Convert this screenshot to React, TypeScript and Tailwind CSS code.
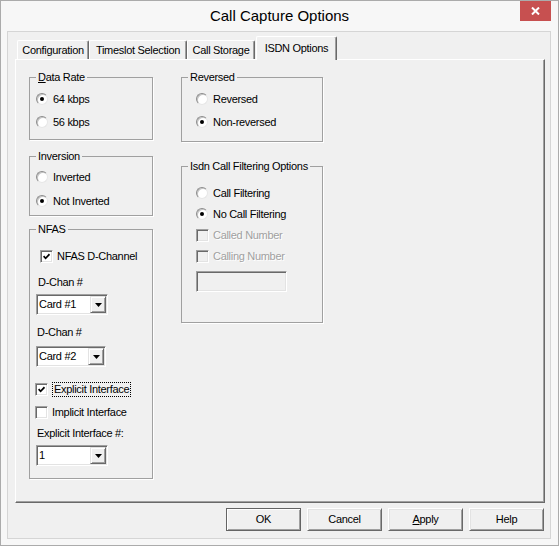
import React from 'react';

const font = "font-['Liberation_Sans',Arial,sans-serif]";

function Radio({ label, checked }: { label: string; checked?: boolean }) {
  return (
    <div className="flex items-center h-[16px] gap-[5px]">
      <span className="w-[12px] h-[12px] shrink-0 rounded-full bg-white border border-t-[#8c8c8c] border-l-[#8c8c8c] border-r-[#e6e6e6] border-b-[#e6e6e6] shadow-[inset_1px_1px_0_#c4c4c4] flex items-center justify-center">
        {checked && <span className="w-[4px] h-[4px] rounded-full bg-black" />}
      </span>
      <span>{label}</span>
    </div>
  );
}

function Check({
  label,
  checked,
  disabled,
  focused,
}: {
  label: string;
  checked?: boolean;
  disabled?: boolean;
  focused?: boolean;
}) {
  return (
    <div className="flex items-center h-[16px] gap-[4px]">
      <span
        className={`w-[13px] h-[13px] shrink-0 border border-t-[#a0a0a0] border-l-[#a0a0a0] border-r-white border-b-white shadow-[inset_1px_1px_0_#696969,inset_-1px_-1px_0_#e3e3e3] flex items-center justify-center ${
          disabled ? 'bg-[#f0f0f0]' : 'bg-white'
        }`}
      >
        {checked && (
          <svg width="7" height="7" viewBox="0 0 7 7">
            <path d="M0.6 3.2 L2.6 5.3 L6.5 1.2" stroke="#000" strokeWidth="1.7" fill="none" />
          </svg>
        )}
      </span>
      <span
        className={
          disabled
            ? 'text-[#a0a0a0] [text-shadow:1px_1px_0_#fff]'
            : focused
              ? 'border border-dotted border-black px-[1px] leading-[13px]'
              : ''
        }
      >
        {label}
      </span>
    </div>
  );
}

function Combo({ value, className }: { value: string; className: string }) {
  return (
    <div
      className={`h-[21px] flex bg-white p-[1px] border border-t-[#a0a0a0] border-l-[#a0a0a0] border-r-white border-b-white shadow-[inset_1px_1px_0_#696969,inset_-1px_-1px_0_#e3e3e3] ${className}`}
    >
      <div className="flex-1 flex items-center pl-[1px]">{value}</div>
      <div className="w-[16px] bg-[#f0f0f0] border border-t-[#e3e3e3] border-l-[#e3e3e3] border-r-[#696969] border-b-[#696969] shadow-[inset_1px_1px_0_#fff,inset_-1px_-1px_0_#a0a0a0] flex items-center justify-center">
        <svg width="7" height="4" viewBox="0 0 7 4">
          <polygon points="0,0 7,0 3.5,4" fill="#000" />
        </svg>
      </div>
    </div>
  );
}

function Group({
  title,
  className,
  children,
}: {
  title: React.ReactNode;
  className: string;
  children: React.ReactNode;
}) {
  return (
    <fieldset className={`border border-[#a0a0a0] shadow-[1px_1px_0_#fff] ${className}`}>
      <legend className="ml-[6px] px-[2px] leading-[13px]">{title}</legend>
      {children}
    </fieldset>
  );
}

function Tab({ label, className }: { label: string; className: string }) {
  return (
    <div
      className={`h-[19px] flex items-center justify-center bg-[#f0f0f0] border-t border-l border-white border-r border-r-[#696969] rounded-t-[2px] shadow-[inset_-1px_0_0_#a0a0a0] ${className}`}
    >
      {label}
    </div>
  );
}

function Btn({ children, def }: { children: React.ReactNode; def?: boolean }) {
  return (
    <button
      type="button"
      className={`w-[75px] h-[23px] flex items-center justify-center bg-[#f0f0f0] ${
        def
          ? 'border border-[#646464] shadow-[inset_1px_1px_0_#fff,inset_-1px_-1px_0_#a0a0a0]'
          : 'border border-t-white border-l-white border-r-[#696969] border-b-[#696969] shadow-[inset_1px_1px_0_#e3e3e3,inset_-1px_-1px_0_#a0a0a0]'
      }`}
    >
      {children}
    </button>
  );
}

export default function App() {
  return (
    <div
      className={`w-[559px] h-[546px] border border-[#ababab] bg-[#f7f7f7] flex flex-col text-[11px] tracking-[-0.3px] text-black ${font}`}
    >
      {/* Title bar */}
      <div className="h-[30px] grid grid-cols-[1fr_auto_1fr]">
        <div />
        <div className="text-[15px] leading-[30px] tracking-normal">Call Capture Options</div>
        <div className="flex justify-end pr-[7px]">
          <div className="w-[31px] h-[20px] bg-[#c75050] flex items-center justify-center">
            <svg width="9" height="8" viewBox="0 0 9 8">
              <path d="M1 0.5 L8 7.5 M8 0.5 L1 7.5" stroke="#fff" strokeWidth="2" />
            </svg>
          </div>
        </div>
      </div>

      {/* Client area */}
      <div className="ml-[6px] w-[544px] h-[508px] border border-[#d5d5d5] bg-[#f0f0f0] flex flex-col pl-[7px]">
        {/* Tabs */}
        <div className="h-[27px] flex items-end pl-[2px]">
          <Tab label="Configuration" className="w-[72px]" />
          <Tab label="Timeslot Selection" className="w-[98px]" />
          <Tab label="Call Storage" className="w-[68px]" />
          <div className="relative z-10 ml-[1px] w-[81px] h-[24px] -mb-[1px] flex items-center justify-center bg-[#f0f0f0] border-t border-l border-white border-r border-r-[#696969] rounded-t-[2px] shadow-[inset_-1px_0_0_#a0a0a0]">
            ISDN Options
          </div>
        </div>

        {/* Tab panel */}
        <div className="w-[530px] h-[444px] border-t border-l border-white border-r border-b border-r-[#696969] border-b-[#696969] shadow-[inset_-1px_-1px_0_#a0a0a0] flex pl-[13px] pt-[11px]">
          {/* Left column */}
          <div className="w-[124px] flex flex-col">
            <Group
              className="h-[69px]"
              title={
                <>
                  <span className="underline">D</span>ata Rate
                </>
              }
            >
              <div className="flex flex-col gap-[7px] pt-[7px] pl-[6px]">
                <Radio label="64 kbps" checked />
                <Radio label="56 kbps" />
              </div>
            </Group>

            <Group className="mt-[10px] h-[66px]" title="Inversion">
              <div className="flex flex-col gap-[8px] pt-[6px] pl-[6px]">
                <Radio label="Inverted" />
                <Radio label="Not Inverted" checked />
              </div>
            </Group>

            <Group className="mt-[7px] h-[256px]" title="NFAS">
              <div className="flex flex-col items-start pt-[12px]">
                <div className="ml-[10px]">
                  <Check label="NFAS D-Channel" checked />
                </div>
                <div className="mt-[12px] ml-[8px] leading-[13px]">D-Chan #</div>
                <Combo value="Card #1" className="mt-[5px] ml-[6px] w-[72px]" />
                <div className="mt-[11px] ml-[7px] leading-[13px]">D-Chan #</div>
                <Combo value="Card #2" className="mt-[7px] ml-[6px] w-[70px]" />
                <div className="mt-[14px] ml-[5px]">
                  <Check label="Explicit Interface" checked focused />
                </div>
                <div className="mt-[7px] ml-[5px]">
                  <Check label="Implicit Interface" />
                </div>
                <div className="mt-[7px] ml-[7px] leading-[13px]">Explicit Interface #:</div>
                <Combo value="1" className="mt-[5px] ml-[6px] w-[72px]" />
              </div>
            </Group>
          </div>

          {/* Right column */}
          <div className="w-[142px] ml-[28px] flex flex-col">
            <Group className="h-[71px]" title="Reversed">
              <div className="flex flex-col gap-[7px] pt-[7px] pl-[14px]">
                <Radio label="Reversed" />
                <Radio label="Non-reversed" checked />
              </div>
            </Group>

            <Group className="mt-[18px] h-[163px]" title="Isdn Call Filtering Options">
              <div className="flex flex-col gap-[5px] pt-[12px] pl-[14px]">
                <Radio label="Call Filtering" />
                <Radio label="No Call Filtering" checked />
                <Check label="Called Number" disabled />
                <Check label="Calling Number" disabled />
                <div className="mt-[2px] w-[91px] h-[21px] bg-[#f0f0f0] border border-t-[#a0a0a0] border-l-[#a0a0a0] border-r-white border-b-white shadow-[inset_1px_1px_0_#696969,inset_-1px_-1px_0_#e3e3e3]" />
              </div>
            </Group>
          </div>
        </div>

        {/* Buttons */}
        <div className="mt-[5px] pr-[6px] flex justify-end gap-[6px]">
          <Btn def>OK</Btn>
          <Btn>Cancel</Btn>
          <Btn>
            <span className="underline">A</span>pply
          </Btn>
          <Btn>Help</Btn>
        </div>
      </div>
    </div>
  );
}
